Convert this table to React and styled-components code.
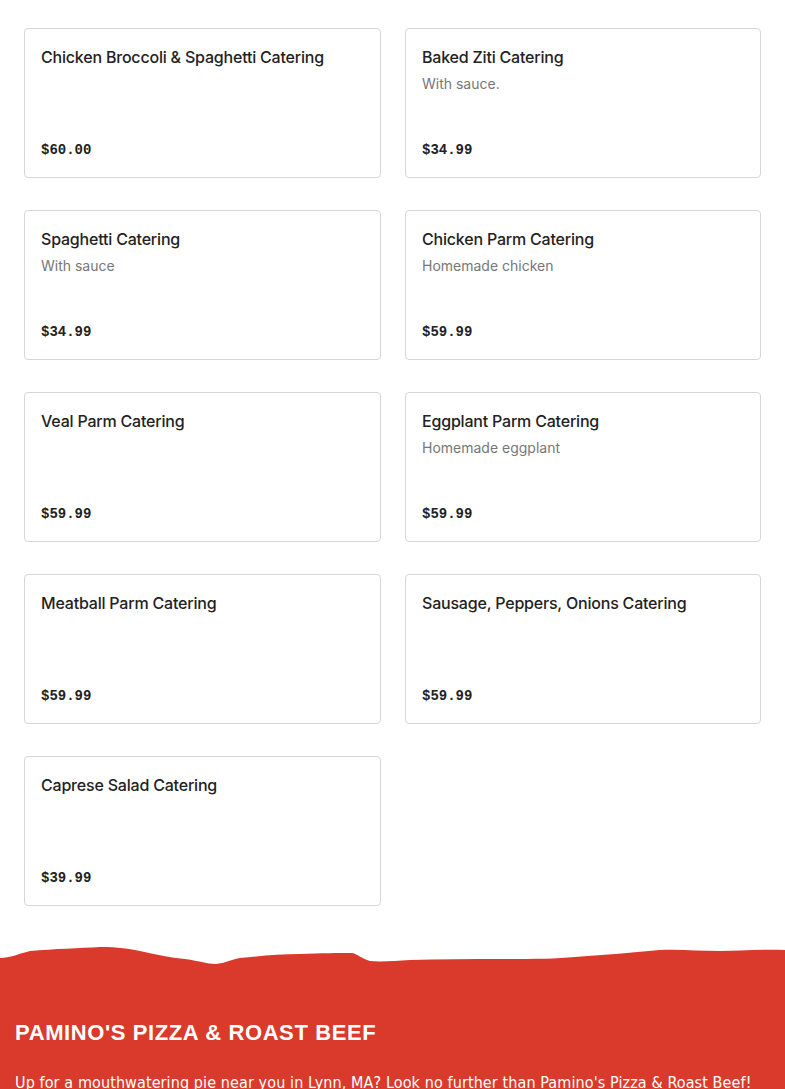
import styled, { createGlobalStyle } from "styled-components";

const GlobalStyle = createGlobalStyle`
  body {
    margin: 0;
    background: #ffffff;
    font-family: "Inter", "Liberation Sans", sans-serif;
  }
`;

const items = [
  { name: "Chicken Broccoli & Spaghetti Catering", price: "$60.00" },
  { name: "Baked Ziti Catering", desc: "With sauce.", price: "$34.99" },
  { name: "Spaghetti Catering", desc: "With sauce", price: "$34.99" },
  { name: "Chicken Parm Catering", desc: "Homemade chicken", price: "$59.99" },
  { name: "Veal Parm Catering", price: "$59.99" },
  { name: "Eggplant Parm Catering", desc: "Homemade eggplant", price: "$59.99" },
  { name: "Meatball Parm Catering", price: "$59.99" },
  { name: "Sausage, Peppers, Onions Catering", price: "$59.99" },
  { name: "Caprese Salad Catering", price: "$39.99" },
];

const Grid = styled.section`
  display: grid;
  grid-template-columns: 357px 356px;
  column-gap: 24px;
  row-gap: 32px;
  padding: 28px 24px 0;
`;

const Card = styled.div`
  box-sizing: border-box;
  height: 150px;
  border: 1px solid #d6d6d6;
  border-radius: 4px;
  padding: 16px;
  display: flex;
  flex-direction: column;
`;

const Name = styled.p`
  margin: 0;
  font-size: 16px;
  line-height: 24px;
  font-weight: 500;
  color: #222222;
  letter-spacing: -0.2px;
`;

const Desc = styled.p`
  margin: 5px 0 0;
  font-size: 14px;
  line-height: 20px;
  color: #777777;
`;

const Price = styled.p`
  margin: auto 0 0;
  font-family: "Liberation Mono", "DejaVu Sans Mono", monospace;
  font-weight: 700;
  font-size: 14px;
  line-height: 22px;
  color: #222222;
`;

const Footer = styled.footer`
  margin-top: 38px;
`;

const Wave = styled.svg`
  display: block;
  width: 100%;
  height: 24px;
`;

const FooterBody = styled.div`
  background: #da3a2b;
  padding: 51px 15px 0;
  height: 140px;
`;

const Brand = styled.h2`
  margin: 0;
  font-family: "Liberation Sans", "Arial", sans-serif;
  font-weight: 700;
  font-size: 22px;
  line-height: 28px;
  letter-spacing: 0.6px;
  color: #ffffff;
  text-transform: uppercase;
`;

const Blurb = styled.p`
  margin: 24px 0 0;
  font-family: "Liberation Sans Narrow", "DejaVu Sans Condensed", sans-serif;
  font-size: 16px;
  line-height: 24px;
  letter-spacing: 0.1px;
  white-space: nowrap;
  color: #ffffff;
`;

const MenuCard = ({ item }) => (
  <Card>
    <Name>{item.name}</Name>
    {item.desc && <Desc>{item.desc}</Desc>}
    <Price>{item.price}</Price>
  </Card>
);

const App = () => (
  <>
    <GlobalStyle />
    <Grid>
      {items.map((item) => (
        <MenuCard key={item.name} item={item} />
      ))}
    </Grid>
    <Footer>
      <Wave viewBox="0 0 785 24" preserveAspectRatio="none">
        <path
          fill="#da3a2b"
          d="M0 14 C10 14 18 10 30 7 C55 5 80 4 100 3 C118 3 130 5 140 7 C155 10 170 14 185 15 C200 17 208 20 215 20 C222 20 230 16 240 14 C260 12 280 10 300 10 C320 9 340 9 352 9 C358 10 362 15 370 17 C380 18 395 17 410 16 C440 15 470 15 500 15 C530 15 555 15 575 13 C600 11 630 9 660 6 C680 5 700 7 720 7 C740 7 760 5 785 6 L785 24 L0 24 Z"
        />
      </Wave>
      <FooterBody>
        <Brand>Pamino's Pizza &amp; Roast Beef</Brand>
        <Blurb>
          Up for a mouthwatering pie near you in Lynn, MA? Look no further than
          Pamino's Pizza &amp; Roast Beef!
        </Blurb>
      </FooterBody>
    </Footer>
  </>
);

export default App;
